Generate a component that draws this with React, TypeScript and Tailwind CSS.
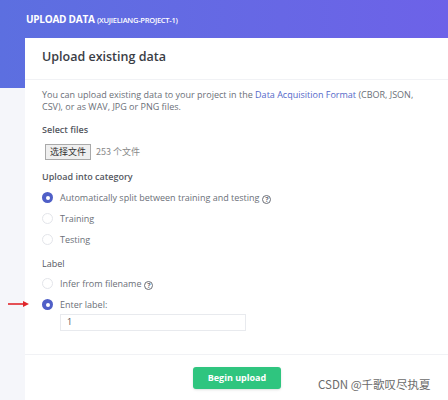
import React from 'react';

const Radio: React.FC<{ checked?: boolean }> = ({ checked }) => (
  <span
    className={`flex h-[11px] w-[11px] shrink-0 items-center justify-center rounded-full ${
      checked ? 'bg-[#4f5fc7]' : 'border border-[#e3e5ea] bg-white'
    }`}
  >
    {checked && <span className="h-[4px] w-[4px] rounded-full bg-white" />}
  </span>
);

const Help = () => (
  <span className="ml-[3px] inline-flex h-[9px] w-[9px] items-center justify-center rounded-full border border-[#6b6f78] align-[-1px] text-[7px] font-bold leading-none text-[#6b6f78]">
    ?
  </span>
);

const App: React.FC = () => {
  return (
    <div className="relative h-[400px] w-[448px] overflow-hidden bg-[#f5f6fa] font-['Open_Sans',sans-serif]">
      {/* header band */}
      <div className="h-[88px] bg-gradient-to-r from-[#5c6fe0] to-[#6d62e8] px-[26px] pt-[12px]">
        <p className="text-[10px] font-bold tracking-tight text-white">
          UPLOAD DATA <span className="text-[7.5px] font-semibold">(XUJIELIANG-PROJECT-1)</span>
        </p>
      </div>

      {/* card */}
      <div className="absolute left-[25px] top-[38px] h-[380px] w-[440px] bg-white text-[#6b6f78]">
        <div className="border-b border-[#f1f2f5] px-[17px] pb-[12px] pt-[10px]">
          <h2 className="text-[12.5px] font-semibold text-[#3a3d45]">Upload existing data</h2>
        </div>

        <div className="px-[17px] pt-[9px] text-[9px] leading-[12px]">
          <p className="w-[386px]">
            You can upload existing data to your project in the{' '}
            <span className="text-[#5468c9]">Data Acquisition Format</span> (CBOR, JSON, CSV), or as WAV, JPG or PNG
            files.
          </p>

          <p className="mt-[11px] font-semibold text-[#55585f]">Select files</p>
          <div className="ml-[3px] mt-[8px] flex items-center gap-[5px]">
            <span className="border border-[#a9a9a9] bg-[#efefef] px-[4px] py-[1px] text-[9px] text-[#333] font-['Noto_Sans_CJK_SC',sans-serif]">
              选择文件
            </span>
            <span className="font-['Noto_Sans_CJK_SC',sans-serif] text-[#888]">253 个文件</span>
          </div>

          <p className="mt-[11px] font-semibold text-[#55585f]">Upload into category</p>
          <div className="mt-[9px] flex flex-col gap-[9px]">
            <label className="flex items-center gap-[7px]">
              <Radio checked />
              <span>
                Automatically split between training and testing
                <Help />
              </span>
            </label>
            <label className="flex items-center gap-[7px]">
              <Radio />
              <span>Training</span>
            </label>
            <label className="flex items-center gap-[7px]">
              <Radio />
              <span>Testing</span>
            </label>
          </div>

          <p className="mt-[12px] text-[#55585f]">Label</p>
          <div className="mt-[8px] flex flex-col gap-[9px]">
            <label className="flex items-center gap-[7px]">
              <Radio />
              <span>
                Infer from filename
                <Help />
              </span>
            </label>
            <label className="relative flex items-center gap-[7px]">
              <Radio checked />
              <span>Enter label:</span>
              <svg className="absolute left-[-34px] top-[1px]" width="22" height="8" viewBox="0 0 22 8">
                <line x1="0" y1="4" x2="18" y2="4" stroke="#e0262b" strokeWidth="1.6" />
                <path d="M15 1 L21 4 L15 7 Z" fill="#e0262b" />
              </svg>
            </label>
          </div>
          <div className="ml-[18px] mt-[3px] flex h-[17px] w-[186px] items-center border border-[#e8eaee] px-[6px] text-[9px] text-[#555]">
            1
          </div>
        </div>

        <div className="mt-[23px] flex justify-center border-t border-[#f1f2f5] pr-[16px] pt-[12px]">
          <button className="h-[22px] w-[88px] rounded-[3px] bg-[#2fc57f] text-[9px] font-bold text-white shadow-sm">
            Begin upload
          </button>
        </div>
      </div>

      <p className="absolute left-[318px] top-[376px] font-['Noto_Sans_CJK_SC',sans-serif] text-[11.5px] text-[#6b6b6b]">
        CSDN @千歌叹尽执夏
      </p>
    </div>
  );
};

export default App;
